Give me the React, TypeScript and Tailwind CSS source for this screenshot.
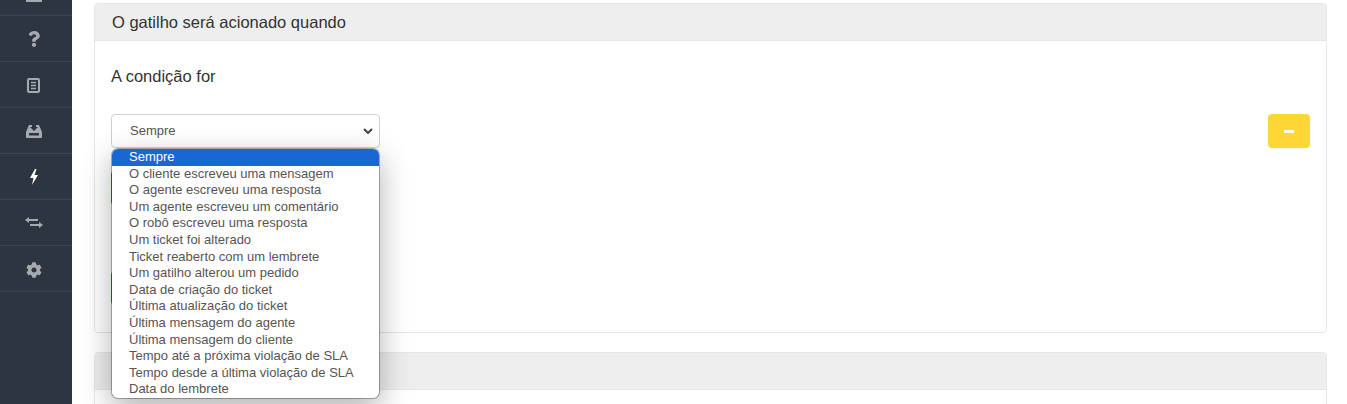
import { FaQuestion, FaCog } from "react-icons/fa";

const options = [
  "Sempre",
  "O cliente escreveu uma mensagem",
  "O agente escreveu uma resposta",
  "Um agente escreveu um comentário",
  "O robô escreveu uma resposta",
  "Um ticket foi alterado",
  "Ticket reaberto com um lembrete",
  "Um gatilho alterou um pedido",
  "Data de criação do ticket",
  "Última atualização do ticket",
  "Última mensagem do agente",
  "Última mensagem do cliente",
  "Tempo até a próxima violação de SLA",
  "Tempo desde a última violação de SLA",
  "Data do lembrete",
];

function ListIcon() {
  return (
    <svg width="13" height="15" viewBox="0 0 13 15" className="mt-[2px]">
      <rect x="1" y="1" width="11" height="13" rx="1" fill="none" stroke="currentColor" strokeWidth="2" />
      <path d="M4 4.5h5M4 7.5h5M4 10.5h5" stroke="currentColor" strokeWidth="1.5" />
    </svg>
  );
}

function TrayIcon() {
  return (
    <svg width="16" height="14" viewBox="0 0 16 14">
      <path d="M3 1H13L16 8V13a1 1 0 0 1-1 1H1a1 1 0 0 1-1-1V8Z" fill="currentColor" />
      <path d="M6 0H10V3H12L8 7L4 3H6Z" fill="#2d3540" />
      <rect x="3" y="9" width="10" height="2.5" fill="#2d3540" />
    </svg>
  );
}

function BoltIcon() {
  return (
    <svg width="8" height="16" viewBox="0 0 8 16" className="mt-[1px]">
      <path d="M5 0L0 9H3.5L2 16L8 6H4.5L6.5 0Z" fill="currentColor" />
    </svg>
  );
}

function ArrowsIcon() {
  return (
    <svg width="18" height="11" viewBox="0 0 18 11">
      <path d="M3 3H13M5 8H15" stroke="currentColor" strokeWidth="2" />
      <path d="M0 3L4 0V6ZM18 8L14 5V11Z" fill="currentColor" />
    </svg>
  );
}

function Sidebar() {
  const rowClass = "h-[46px] pr-[5px] flex items-center justify-center border-b border-[#3c444f] text-[#a6a9ae]";
  return (
    <aside className="relative z-20 w-[72px] shrink-0 h-full bg-[#2d3540] overflow-hidden">
      <div className="h-[16px] pr-[5px] flex justify-center border-b border-[#3c444f]">
        <div className="w-[16px] h-[2px] bg-[#a6a9ae]" />
      </div>
      <div className={rowClass}><FaQuestion className="text-[16px] mt-[1px]" /></div>
      <div className={rowClass}><ListIcon /></div>
      <div className={rowClass}><TrayIcon /></div>
      <div className={`${rowClass} text-white`}><BoltIcon /></div>
      <div className={rowClass}><ArrowsIcon /></div>
      <div className={rowClass}><FaCog className="text-[16px] mt-[2px]" /></div>
    </aside>
  );
}

export default function App() {
  return (
    <div className="w-[1347px] h-[404px] flex overflow-hidden bg-white font-['Liberation_Sans',Arial,sans-serif]">
      <Sidebar />
      <main className="flex-1 pl-[22px] pr-[20px] pt-[3px]">
        <section className="h-[330px] border border-[#e6e6e6] rounded-[4px]">
          <div className="h-[37px] bg-[#eeeeee] border-b border-[#e6e6e6] px-[17px] flex items-center text-[16.5px] text-[#333]">
            O gatilho será acionado quando
          </div>
          <div className="relative px-[16px] pt-[24px]">
            <p className="text-[16.5px] leading-[22px] text-[#333]">A condição for</p>
            <div className="mt-[27px] flex justify-between items-start">
              <div className="relative w-[269px]">
                <div className="h-[34px] border border-[#ccd0d6] rounded-[4px] pl-[18px] pr-[6px] flex items-center justify-between text-[13px] text-[#555]">
                  Sempre
                  <svg width="10" height="6" viewBox="0 0 10 6">
                    <path d="M1 1L5 5L9 1" fill="none" stroke="#444" strokeWidth="2" />
                  </svg>
                </div>
                <div className="absolute z-10 left-0 top-[34px] w-[269px] h-[251px] bg-white bg-clip-padding border border-black/30 rounded-[7px] overflow-hidden shadow-[0_10px_30px_rgba(0,0,0,0.3)] text-[13px] leading-[16.6px] text-[#555]">
                  {options.map((o, i) => (
                    <div key={o} className={i === 0 ? "pl-[17px] bg-[#1a66d2] text-white" : "pl-[17px]"}>
                      {o}
                    </div>
                  ))}
                </div>
                <div className="mt-[23px] w-[40px] h-[34px] bg-[#28a745] rounded-[4px]" />
                <div className="mt-[66px] w-[40px] h-[34px] bg-[#28a745] rounded-[4px]" />
              </div>
              <button className="w-[42px] h-[34px] bg-[#fdd835] rounded-[4px] flex items-center justify-center">
                <span className="w-[10px] h-[3px] bg-white" />
              </button>
            </div>
          </div>
        </section>
        <section className="mt-[19px] h-[60px] border border-[#e6e6e6] rounded-[4px]">
          <div className="h-[37px] bg-[#eeeeee] border-b border-[#e6e6e6]" />
        </section>
      </main>
    </div>
  );
}
